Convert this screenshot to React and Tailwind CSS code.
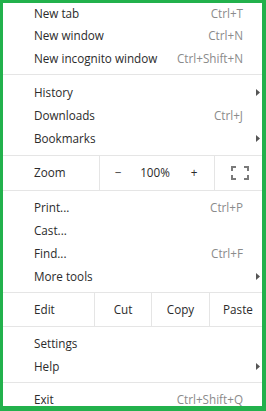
import React from 'react';

const font = { fontFamily: '"Open Sans", "Noto Sans", sans-serif' };

const Arrow = () => (
    <svg width="4" height="7" viewBox="0 0 4 7" className="block">
        <path d="M0 0 L4 3.5 L0 7 Z" fill="#555555" />
    </svg>
);

const Item = ({ label, shortcut, arrow, h = 'h-[23px]' }) => (
    <div className={`flex items-center ${h} pl-[31px]`}>
        <span className="flex-1 text-[#2b2b2b]">{label}</span>
        {shortcut && <span className="text-[#8b8b8b]">{shortcut}</span>}
        <span className="w-[19px] flex justify-end pr-[2px]">{arrow && <Arrow />}</span>
    </div>
);

const Sep = () => <div className="h-px bg-[#e5e5e5]" />;

const FullscreenIcon = () => (
    <svg width="18" height="14" viewBox="0 0 18 14" fill="none" stroke="#7a7a7a" strokeWidth="2">
        <path d="M1 5 V1 H5" />
        <path d="M13 1 H17 V5" />
        <path d="M17 9 V13 H13" />
        <path d="M5 13 H1 V9" />
    </svg>
);

export default function App() {
    return (
        <div
            style={font}
            className="w-[266px] h-[411px] overflow-hidden bg-white border-[#22b14c] border-t-[3px] border-l-[3px] border-r-[4px] border-b-[5px] text-[11.7px] leading-none"
        >
            <div className="pb-[4px]">
                <Item label="New tab" shortcut="Ctrl+T" h="h-[21px]" />
                <Item label="New window" shortcut="Ctrl+N" />
                <Item label="New incognito window" shortcut="Ctrl+Shift+N" />
            </div>
            <Sep />
            <div className="pt-[6px] pb-[5px]">
                <Item label="History" arrow />
                <Item label="Downloads" shortcut="Ctrl+J" />
                <Item label="Bookmarks" arrow />
            </div>
            <Sep />
            <div className="flex h-[34px] items-stretch text-[#2b2b2b]">
                <div className="w-[97px] flex items-center pl-[31px] border-r border-[#e5e5e5]">Zoom</div>
                <div className="w-[36px] flex items-center justify-center">−</div>
                <div className="w-[38px] flex items-center justify-center">100%</div>
                <div className="w-[40px] flex items-center justify-center">+</div>
                <div className="flex-1 flex items-center justify-center border-l border-[#e5e5e5] pl-[3px]">
                    <FullscreenIcon />
                </div>
            </div>
            <Sep />
            <div className="pt-[5px] pb-[4px]">
                <Item label="Print..." shortcut="Ctrl+P" />
                <Item label="Cast..." />
                <Item label="Find..." shortcut="Ctrl+F" />
                <Item label="More tools" arrow />
            </div>
            <Sep />
            <div className="flex h-[33px] items-stretch text-[#2b2b2b]">
                <div className="w-[92px] flex items-center pl-[31px] border-r border-[#e5e5e5]">Edit</div>
                <div className="w-[57px] flex items-center justify-center border-r border-[#e5e5e5]">Cut</div>
                <div className="w-[58px] flex items-center justify-center border-r border-[#e5e5e5]">Copy</div>
                <div className="flex-1 flex items-center justify-center pl-[4px]">Paste</div>
            </div>
            <Sep />
            <div className="pt-[5px] pb-[4px]">
                <Item label="Settings" />
                <Item label="Help" arrow />
            </div>
            <Sep />
            <div className="pt-[5px]">
                <Item label="Exit" shortcut="Ctrl+Shift+Q" />
            </div>
        </div>
    );
}
